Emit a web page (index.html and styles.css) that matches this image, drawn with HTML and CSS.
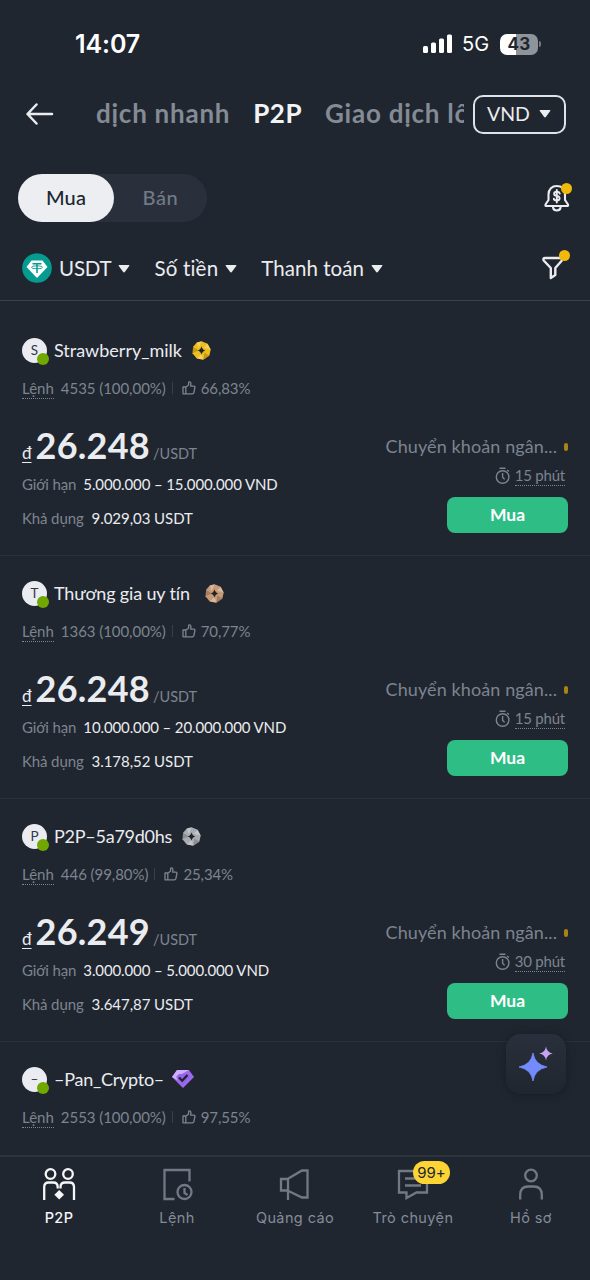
FILE: index.html
```html
<!DOCTYPE html>
<html lang="vi">
<head>
<meta charset="utf-8">
<title>P2P</title>
<link rel="stylesheet" href="styles.css">
</head>
<body>
<svg width="0" height="0" class="defs" aria-hidden="true">
  <defs>
    <symbol id="thumb" viewBox="0 0 14 14"><path d="M1 6h2.800v6.800H1zM3.800 6.200 6.600 4V1.600Q6.600.8 7.400.8q1.500 0 1.500 1.600L8.700 5.200h3.100q1.300 0 1.100 1.300l-1 5q-.3 1.300-1.500 1.300H3.800" fill="none" stroke="currentColor" stroke-width="1.300" stroke-linejoin="round"/></symbol>
    <symbol id="timer" viewBox="0 0 16 18"><path d="M4.500 1.200h6M12.200 3l1.600 1.500M7.600 6v4.200l2 2.200" fill="none" stroke="currentColor" stroke-width="1.400"/><circle cx="7.600" cy="10" r="6.300" fill="none" stroke="currentColor" stroke-width="1.400"/></symbol>
    <symbol id="medal" viewBox="0 0 20 20"><path d="M10 .3 16.500 2.800l3.200 6.200-1.500 6.500L12 19.700l-7-1.300L.5 12.800 1.200 6 5 1.600z" fill="currentColor"/><path d="M10 .3 5 1.600 7 8zM19.700 9 12.500 7 16.500 2.800zM12 19.700l-2-6-5 4.700z" fill="#fff" opacity=".3"/><path d="m.5 12.800 6.500-2.800L1.200 6zM18.200 15.500 13 12l-1 7.700z" fill="#000" opacity=".18"/><path d="M10 5.500q.7 3.800 4.200 4.500-3.500.7-4.200 4.500Q9.300 10.700 5.800 10 9.300 9.300 10 5.500z" fill="#20242b"/></symbol>
    <symbol id="caret" viewBox="0 0 12 8"><path d="M1.300 0h9.400q1.300 0 .5 1L7 6.800q-1 1.200-2 0L.8 1Q0 0 1.300 0z" fill="currentColor"/></symbol>
  </defs>
</svg>
<div class="screen">
  <div class="status">
    <span class="clock">14:07</span>
    <div class="status-right">
      <svg width="30" height="20" viewBox="0 0 30 20" fill="#fff"><rect x="0" y="12" width="5" height="7" rx="1.500"/><rect x="8" y="8.500" width="5" height="10.500" rx="1.500"/><rect x="16" y="4.500" width="5" height="14.500" rx="1.500"/><rect x="24" y="0.500" width="5" height="18.500" rx="1.500"/></svg>
      <span class="network">5G</span>
      <span class="battery">43</span><span class="battery-tip"></span>
    </div>
  </div>

  <div class="topbar">
    <svg class="back" width="28" height="22" viewBox="0 0 28 22" fill="none" stroke="#eaecef" stroke-width="2.500" stroke-linecap="round" stroke-linejoin="round"><path d="M26 11H2M10.500 1.500 1.500 11l9 9.500"/></svg>
    <div class="tabs"><span class="tab">dịch nhanh</span><span class="tab active">P2P</span><span class="tab">Giao dịch lô</span></div>
    <div class="currency"><span>VND</span><svg width="12" height="8"><use href="#caret"/></svg></div>
  </div>

  <div class="mode">
    <div class="segment"><span class="seg on">Mua</span><span class="seg off">Bán</span></div>
    <div class="bell">
      <svg width="26" height="30" viewBox="0 0 26 30" fill="none" stroke="#eaecef" stroke-width="2.100" stroke-linejoin="round" stroke-linecap="round"><path d="M4.500 17V11.500C4.500 6 8 3 12.800 3S21 6 21 11.500V17l3 4.500q.5 1.500-1 1.500H2.500q-1.500 0-1-1.500zM9 24.500c.8 4 6.800 4 7.600 0"/><path d="M15.800 10.600q-.6-1.800-3-1.800-2.700 0-2.700 2t2.700 2.200 2.800 2.300-2.800 2.100-3-1.800M12.800 7v12.500" stroke-width="1.900"/></svg>
      <i class="dot"></i>
    </div>
  </div>

  <div class="filters">
    <svg class="coin" width="30" height="30" viewBox="0 0 30 30"><circle cx="15" cy="15" r="14.800" fill="#059b91"/><path d="M9.500 7.500h11L25.500 14 15 25 4.500 14z" fill="#fff"/><path d="M10.500 10.800h9M15 10.500V20" stroke="#059b91" stroke-width="1.500"/><ellipse cx="15" cy="14.300" rx="5.500" ry="1.500" fill="none" stroke="#059b91" stroke-width=".9"/></svg>
    <span class="f f-usdt">USDT</span><svg width="12" height="8"><use href="#caret"/></svg>
    <span class="f f-amount">Số tiền</span><svg width="12" height="8"><use href="#caret"/></svg>
    <span class="f f-pay">Thanh toán</span><svg width="12" height="8"><use href="#caret"/></svg>
    <div class="funnel">
      <svg width="22" height="24" viewBox="0 0 22 24" fill="none" stroke="#eaecef" stroke-width="2.400" stroke-linejoin="round"><path d="M3 2h16q1.800 0 .9 1.500v1L13.300 12v7l-4.500 3V12L1.700 4.500Q.8 2 3 2z"/></svg>
      <i class="dot"></i>
    </div>
  </div>

  <main class="offers">
    <article class="offer">
      <div class="who"><span class="avatar">S<i></i></span><span class="name n1">Strawberry_milk</span><svg class="gold" width="19" height="19"><use href="#medal"/></svg></div>
      <div class="stats"><span class="orders">Lệnh</span><span class="count">4535 (100,00%)</span><i class="bar"></i><svg width="14" height="14"><use href="#thumb"/></svg><span>66,83%</span></div>
      <div class="body">
        <div class="left"><div class="price"><span class="dong">đ</span><b>26.248</b><span class="unit">/USDT</span></div><div class="line limit"><span>Giới hạn</span><em>5.000.000 – 15.000.000 VND</em></div><div class="line stock"><span>Khả dụng</span><em>9.029,03 USDT</em></div></div>
        <div class="right"><div class="method">Chuyển khoản ngân...<i></i></div><div class="time"><svg width="16" height="18"><use href="#timer"/></svg><span>15 phút</span></div><button class="buy">Mua</button></div>
      </div>
    </article>
    <article class="offer">
      <div class="who"><span class="avatar">T<i></i></span><span class="name n2">Thương gia uy tín</span><svg class="bronze" width="19" height="19"><use href="#medal"/></svg></div>
      <div class="stats"><span class="orders">Lệnh</span><span class="count">1363 (100,00%)</span><i class="bar"></i><svg width="14" height="14"><use href="#thumb"/></svg><span>70,77%</span></div>
      <div class="body">
        <div class="left"><div class="price"><span class="dong">đ</span><b>26.248</b><span class="unit">/USDT</span></div><div class="line limit"><span>Giới hạn</span><em>10.000.000 – 20.000.000 VND</em></div><div class="line stock"><span>Khả dụng</span><em>3.178,52 USDT</em></div></div>
        <div class="right"><div class="method">Chuyển khoản ngân...<i></i></div><div class="time"><svg width="16" height="18"><use href="#timer"/></svg><span>15 phút</span></div><button class="buy">Mua</button></div>
      </div>
    </article>
    <article class="offer">
      <div class="who"><span class="avatar">P<i></i></span><span class="name n3">P2P–5a79d0hs</span><svg class="silver" width="19" height="19"><use href="#medal"/></svg></div>
      <div class="stats"><span class="orders">Lệnh</span><span class="count">446 (99,80%)</span><i class="bar"></i><svg width="14" height="14"><use href="#thumb"/></svg><span>25,34%</span></div>
      <div class="body">
        <div class="left"><div class="price"><span class="dong">đ</span><b>26.249</b><span class="unit">/USDT</span></div><div class="line limit"><span>Giới hạn</span><em>3.000.000 – 5.000.000 VND</em></div><div class="line stock"><span>Khả dụng</span><em>3.647,87 USDT</em></div></div>
        <div class="right"><div class="method">Chuyển khoản ngân...<i></i></div><div class="time"><svg width="16" height="18"><use href="#timer"/></svg><span>30 phút</span></div><button class="buy">Mua</button></div>
      </div>
    </article>
    <article class="offer last">
      <div class="who"><span class="avatar">–<i></i></span><span class="name n4">–Pan_Crypto–</span><svg class="gem" width="22" height="20" viewBox="0 0 22 20"><path d="M5 1h12l5 7-11 11L0 8z" fill="#9c69ee"/><path d="M5 1 0 8l5 3 3-5 9-5z" fill="#cfaeff"/><path d="M7 5h8l3 3-7 8-7-8z" fill="#9562ea"/><path d="m7 8.500 3.200 3.200L15.500 6" fill="none" stroke="#20242b" stroke-width="2.300"/></svg></div>
      <div class="stats"><span class="orders">Lệnh</span><span class="count">2553 (100,00%)</span><i class="bar"></i><svg width="14" height="14"><use href="#thumb"/></svg><span>97,55%</span></div>
    </article>
  </main>

  <div class="assistant"><svg width="60" height="60" viewBox="0 0 60 60"><path d="M27 20q1.800 11.700 14 14-12.200 2.300-14 14-1.800-11.700-14-14 12.200-2.300 14-14z" fill="#738bfd" stroke="#738bfd" stroke-width=".8" transform="translate(0 -1)"/><path d="M40 13.500q.8 6 6.800 7-6 1-6.800 7-.8-6-6.800-7 6-1 6.800-7z" fill="#c5a4f4" transform="translate(0 -1)"/></svg></div>

  <nav class="nav">
    <a class="item current"><svg width="34" height="34" viewBox="0 0 34 34" fill="none" stroke="#f5f6f8" stroke-width="2.300"><circle cx="8.500" cy="7" r="4.800"/><circle cx="26" cy="7" r="4.800"/><path d="M2.200 33V20q0-4.500 4.500-4.500h4.500q4.500 0 4.500 4.500v1.500M32 33V20q0-4.500-4.500-4.500h-4.500q-4.500 0-4.500 4.500v1.500"/><path d="m17.200 23 4.800 4.800-4.800 4.700-4.800-4.700z" fill="#f5f6f8" stroke="none"/></svg><span>P2P</span></a>
    <a class="item"><svg width="34" height="34" viewBox="0 0 34 34" fill="none" stroke="#727985" stroke-width="2.300"><path d="M14.500 32H4.500V3H29.500v11.500"/><circle cx="24.500" cy="25" r="7"/><path d="M24.500 21v5l3 2"/></svg><span>Lệnh</span></a>
    <a class="item"><svg width="34" height="34" viewBox="0 0 34 34" fill="none" stroke="#727985" stroke-width="2.300"><path d="M3 12h7v11.500H3zM9.500 12 24 3.500h5.500v27H24L9.500 23.500M10 23v10"/></svg><span>Quảng cáo</span></a>
    <a class="item"><svg width="34" height="34" viewBox="0 0 34 34" fill="none" stroke="#727985" stroke-width="2.300"><path d="M3 4h28v21.500H20.500L10.500 31v-5.500H3zM9 11.500h15M9 18.500h16"/></svg><span>Trò chuyện</span><i class="badge">99+</i></a>
    <a class="item"><svg width="34" height="34" viewBox="0 0 34 34" fill="none" stroke="#727985" stroke-width="2.300"><circle cx="17" cy="8.500" r="5.800"/><path d="M6.200 32.500V28q0-8.500 8-8.500h5.600q8 0 8 8.500v4.500"/></svg><span>Hồ sơ</span></a>
  </nav>
</div>
</body>
</html>
```
FILE: styles.css
```css
* { box-sizing: border-box; }
body { margin: 0; background: #202630; color: #eaecef; font-family: Lato, "Noto Sans", sans-serif; font-variant-ligatures: none; }
i, em { font-style: normal; }
svg { display: block; flex: none; }
.defs { position: absolute; }
.screen { position: relative; width: 590px; height: 1280px; overflow: hidden; display: flex; flex-direction: column; white-space: nowrap; }

.status { height: 88px; padding: 0 49px 0 75px; display: flex; align-items: center; justify-content: space-between; flex: none; font-family: Inter, sans-serif; color: #fff; }
.clock { font-size: 25px; font-weight: 600; letter-spacing: -0.1px; }
.status-right { display: flex; align-items: center; }
.network { font-size: 20px; margin-left: 9px; width: 29px; }
.battery { margin-left: 9px; width: 38px; height: 21px; border-radius: 7px; background: linear-gradient(90deg, #fff 43%, #8f939a 43%); color: #202630; font-size: 17px; font-weight: 700; line-height: 21px; text-align: center; letter-spacing: 0.3px; }
.battery-tip { width: 2px; height: 6px; margin-left: 1px; border-radius: 0 2px 2px 0; background: #757b84; }

.topbar { height: 52px; padding: 0 24px 0 26px; display: flex; align-items: center; flex: none; }
.tabs { width: 368px; margin-left: 42px; padding-bottom: 2px; overflow: hidden; display: flex; gap: 23px; font-size: 26px; line-height: 36px; font-weight: 700; letter-spacing: 0.75px; color: #848b95; }
.tab.active { color: #f2f3f5; letter-spacing: 0.5px; }
.currency { margin-left: 9px; width: 93px; height: 39px; border: 2px solid #dfe2e7; border-radius: 10px; display: flex; align-items: center; justify-content: space-between; padding: 0 13px 0 12px; font-size: 19.500px; }
.currency span { padding-bottom: 1px; }

.mode { height: 116px; display: flex; align-items: center; justify-content: space-between; padding: 0 20px 0 18px; flex: none; }
.segment { width: 189px; height: 48px; border-radius: 24px; background: #29303c; display: flex; font-size: 20px; line-height: 47px; text-align: center; }
.seg.on { width: 96px; border-radius: 24px; background: #eceef2; color: #202630; font-weight: 500; letter-spacing: 0.2px; }
.seg.off { width: 93px; color: #727a87; letter-spacing: 0.6px; font-weight: 500; }
.bell, .funnel { position: relative; }
.dot { position: absolute; width: 11px; height: 11px; border-radius: 50%; background: #f0b90b; }
.bell .dot { top: 0; right: -2px; }

.filters { height: 45px; margin-bottom: 12px; border-bottom: 1px solid #38414c; display: flex; align-items: flex-start; padding: 0 26px 0 22px; flex: none; }
.filters > svg:not(.coin) { margin: 9px 0 0 7px; }
.coin { margin-top: -3px; }
.f { font-size: 20.500px; line-height: 24px; }
.f-usdt { margin-left: 7px; letter-spacing: -0.2px; }
.f-amount { margin-left: 24px; letter-spacing: 0.2px; }
.f-pay { margin-left: 24px; letter-spacing: 0.05px; }
.funnel { margin-left: auto; }
.funnel .dot { top: -6px; right: -6px; }

.offer { height: 243px; padding: 25px 22px 0 22px; border-bottom: 1px solid #2a313b; }
.offer.last { border: 0; }
.who { height: 25px; display: flex; align-items: center; }
.avatar { position: relative; width: 25px; height: 25px; border-radius: 50%; background: #eaecf2; color: #333942; font-size: 13.500px; line-height: 24px; text-align: center; }
.avatar i { position: absolute; left: 15px; top: 15px; width: 12px; height: 12px; border-radius: 50%; background: #70a800; }
.name { margin-left: 7px; padding-bottom: 2px; font-size: 18px; }
.n1 { margin-right: 10px; }
.n2 { margin-right: 15px; letter-spacing: -0.15px; }
.n3 { margin-right: 10px; letter-spacing: -0.25px; }
.n4 { margin-right: 8px; letter-spacing: -0.25px; }
.gold { color: #efbd1d; }
.bronze { color: #c79a75; }
.silver { color: #a9adb1; }
.who svg { margin-bottom: 1px; }
.stats { height: 20px; margin-top: 15px; display: flex; align-items: center; font-size: 15px; line-height: 20px; color: #7c848f; letter-spacing: -0.1px; }
.orders { border-bottom: 1px dotted #7c848f; line-height: 20px; letter-spacing: 0; }
.count { margin-left: 7px; letter-spacing: -0.05px; }
.bar { width: 1px; height: 12px; margin: 0 9px 0 6px; background: #363e49; }
.stats svg { margin-right: 5px; }
.body { display: flex; justify-content: space-between; margin-top: 27px; }
.left { margin-top: -2px; }
.price { height: 45px; display: flex; align-items: baseline; line-height: 45px; }
.price b { font-size: 36px; margin-left: 4px; letter-spacing: 0.25px; }
.dong { font-size: 17px; line-height: 15px; text-decoration: underline; text-underline-offset: 3px; text-decoration-skip-ink: none; }
.unit { font-size: 14.500px; color: #7c848f; margin-left: 3px; }
.line { font-size: 15px; line-height: 22px; color: #7c848f; display: flex; letter-spacing: -0.12px; }
.line em { color: #eaecef; margin-left: 7px; }
.limit { margin-top: 5px; }
.stock { margin-top: 12px; }
.stock em { margin-left: 8px; letter-spacing: -0.05px; }
.right { display: flex; flex-direction: column; align-items: flex-end; }
.method { display: flex; align-items: center; font-size: 18px; line-height: 24px; margin-top: 9px; color: #7c848f; letter-spacing: 0.1px; }
.method i { width: 4px; height: 8px; margin: 2px 0 0 7px; border-radius: 2px; background: #a98313; }
.time { display: flex; align-items: center; gap: 4px; margin: 8px 3px 0 0; font-size: 15px; color: #7c848f; letter-spacing: -0.2px; }
.time span { border-bottom: 1px dotted #7c848f; line-height: 19px; }
.buy { width: 121px; height: 36px; margin: 11px 0 0; padding: 0; border: 0; border-radius: 8px; background: #2ebd85; color: #fff; font: 700 17.500px/36px Lato, sans-serif; }

.assistant { position: absolute; left: 506px; top: 1034px; width: 60px; height: 60px; border-radius: 15px; background: linear-gradient(#2a303b, #202630); box-shadow: 0 1px 8px #171c24; }

.nav { position: absolute; left: 0; top: 1155px; width: 590px; height: 125px; padding-top: 11px; border-top: 2px solid #2c343e; background: #202630; display: flex; }
.item { position: relative; width: 118px; display: flex; flex-direction: column; align-items: center; color: #848c98; font-family: Inter, sans-serif; font-size: 14.500px; line-height: 20px; letter-spacing: 0.4px; }
.item svg { margin-top: -1px; }
.item span { margin-top: 7px; }
.item.current { color: #f5f6f8; font-weight: 500; }
.badge { position: absolute; left: 59px; top: -7px; width: 37px; height: 23px; border-radius: 12px; background: #fcd535; color: #202630; font-size: 15px; line-height: 23px; text-align: center; letter-spacing: 0; }
```
